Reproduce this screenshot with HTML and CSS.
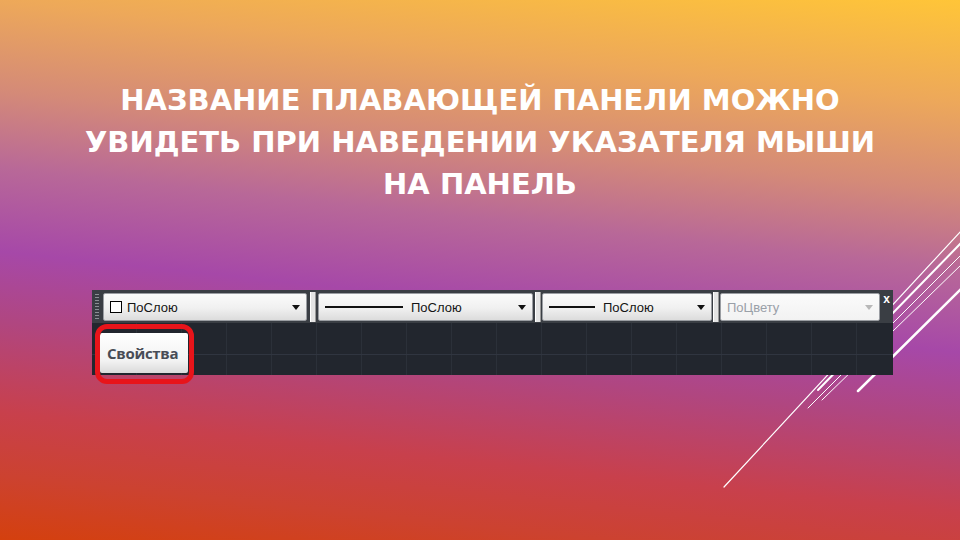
FILE: index.html
```html
<!DOCTYPE html>
<html lang="ru">
<head>
<meta charset="utf-8">
<link rel="stylesheet" href="styles.css">
</head>
<body>
<div class="slide">
  <svg class="deco" width="960" height="540" viewBox="0 0 960 540">
    <g stroke="#fff" fill="none" stroke-linecap="round">
      <line x1="962" y1="230" x2="724" y2="487" stroke-width="1.2"/>
      <line x1="962" y1="242" x2="818" y2="390" stroke-width="2"/>
      <line x1="962" y1="254" x2="808" y2="408" stroke-width="1"/>
      <line x1="962" y1="264" x2="822" y2="400" stroke-width="1"/>
      <line x1="962" y1="288" x2="858" y2="391" stroke-width="2.5"/>
    </g>
  </svg>
  <h1 class="title">Название плавающей панели можно<br>увидеть при наведении указателя мыши<br>на панель</h1>
  <div class="toolbar">
    <div class="tb-top">
      <div class="grip"></div>
      <div class="combo c1">
        <span class="chk"></span><span class="lbl">ПоСлою</span><span class="fill"></span><span class="arrow"></span>
      </div>
      <div class="sep s1"><span></span></div>
      <div class="combo c2">
        <span class="line l-long"></span><span class="lbl">ПоСлою</span><span class="fill"></span><span class="arrow"></span>
      </div>
      <div class="sep s2"><span></span></div>
      <div class="combo c3">
        <span class="line l-short"></span><span class="lbl">ПоСлою</span><span class="fill"></span><span class="arrow"></span>
      </div>
      <div class="sep s3"><span></span></div>
      <div class="combo c4 disabled">
        <span class="lbl">ПоЦвету</span><span class="fill"></span><span class="arrow"></span>
      </div>
      <div class="close">x</div>
    </div>
    <div class="tb-body">
      <div class="btn-wrap">
        <div class="btn">Свойства</div>
        <div class="ring"></div>
      </div>
    </div>
  </div>
</div>
</body>
</html>
```
FILE: styles.css
```css
html, body {
  margin: 0;
  padding: 0;
}
.slide {
  position: relative;
  width: 960px;
  height: 540px;
  overflow: hidden;
  background: linear-gradient(186deg, #ffc538 0%, #eda85a 16%, #d48a78 30%, #b86898 42%, #a648a8 55%, #b04680 66%, #c8404c 80%, #cc4230 90%, #d4400e 100%);
  font-family: "Liberation Sans", Arial, sans-serif;
}
.deco {
  position: absolute;
  left: 0;
  top: 0;
}
.title {
  position: relative;
  margin: 0;
  padding-top: 79px;
  text-align: center;
  color: #fff;
  font-family: "DejaVu Sans", sans-serif;
  font-weight: bold;
  font-size: 29px;
  line-height: 42px;
  text-transform: uppercase;
  letter-spacing: 0;
}
.toolbar {
  position: relative;
  margin: 85px 0 0 92px;
  width: 801px;
  background: #23272f;
}
.tb-top {
  display: flex;
  align-items: center;
  height: 33px;
  background: #3a3e44;
  box-sizing: border-box;
  padding: 3px 0 2px 0;
}
.grip {
  width: 4px;
  height: 26px;
  margin: 0 4px 0 3px;
  background: repeating-linear-gradient(#8a8e94 0 1px, transparent 1px 3px);
}
.combo {
  display: flex;
  align-items: center;
  height: 28px;
  box-sizing: border-box;
  padding: 0 6px 0 6px;
  border: 1px solid #9a9da2;
  border-radius: 2px;
  background: linear-gradient(#fbfbfb, #f0f0f0 55%, #dcdcdc);
  color: #151515;
  font-size: 13px;
}
.c1 { width: 204px; }
.c2 { width: 215px; }
.c3 { width: 170px; }
.c4 { width: 160px; }
.chk {
  width: 10px;
  height: 10px;
  border: 1px solid #000;
  background: #fff;
  margin-right: 5px;
}
.line {
  height: 2px;
  background: #111;
  margin-right: 8px;
}
.l-long { width: 78px; }
.l-short { width: 46px; }
.fill { flex: 1; }
.arrow {
  width: 0;
  height: 0;
  border-left: 4px solid transparent;
  border-right: 4px solid transparent;
  border-top: 5px solid #111;
}
.disabled {
  background: linear-gradient(#fbfbfb, #f2f2f2);
  color: #9aa0a8;
}
.disabled .arrow { border-top-color: #b8b8b8; }
.sep {
  height: 30px;
  display: flex;
  justify-content: center;
  align-items: stretch;
}
.s1 { width: 11px; }
.s2 { width: 9px; }
.s3 { width: 8px; }
.sep span {
  width: 4px;
  background: #e4e4e4;
  border-left: 1px solid #fff;
  border-right: 1px solid #9a9a9a;
}
.close {
  flex: 1;
  align-self: flex-start;
  text-align: center;
  color: #fff;
  font-weight: bold;
  font-size: 12px;
  line-height: 12px;
}
.tb-body {
  height: 52px;
  box-sizing: border-box;
  padding: 10px 0 0 8px;
  background-color: #22262e;
  background-image:
    linear-gradient(transparent 31px, #303540 31px 32px, transparent 32px),
    repeating-linear-gradient(90deg, transparent 0 44px, #2b3039 44px 45px),
    repeating-linear-gradient(90deg, transparent 0 89px, #353a45 89px 90px);
}
.btn-wrap {
  position: relative;
  width: 88px;
}
.btn {
  height: 40px;
  box-sizing: border-box;
  background: linear-gradient(#ffffff, #f2f2f2 70%, #dadada);
  border-radius: 2px;
  display: flex;
  align-items: center;
  padding-left: 7px;
  font-family: "Open Sans", sans-serif;
  font-weight: bold;
  font-size: 15px;
  color: #484c56;
  letter-spacing: -0.3px;
}
.ring {
  position: absolute;
  left: -5px;
  top: -9px;
  right: -6px;
  bottom: -11px;
  border: 5px solid #e8141a;
  border-radius: 12px;
}
```
